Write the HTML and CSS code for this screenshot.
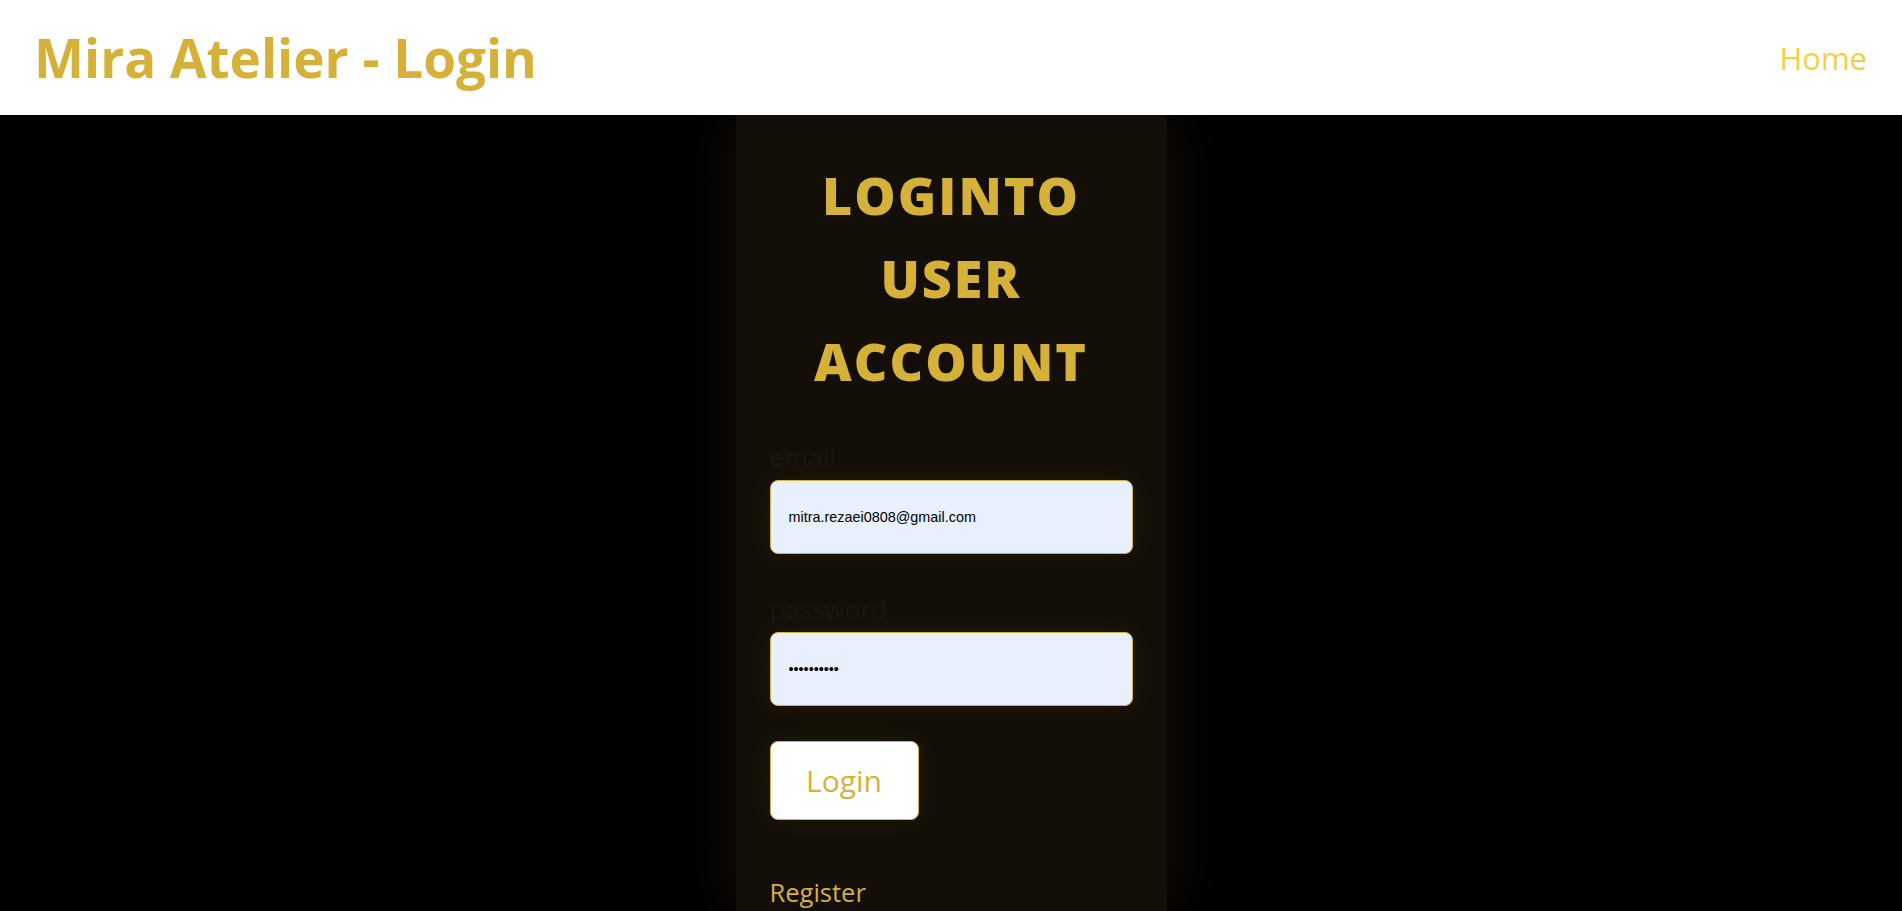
FILE: index.html
```html
<!DOCTYPE html>
<html lang="en">
<head>
<meta charset="utf-8">
<title>Mira Atelier - Login</title>
<link rel="stylesheet" href="styles.css">
</head>
<body>
<header class="topbar">
  <h1 class="brand">Mira Atelier - Login</h1>
  <nav class="nav"><a class="nav-link" href="#">Home</a></nav>
</header>
<main class="stage">
  <section class="card">
    <h2 class="card-title">LOGINTO USER ACCOUNT</h2>
    <form class="form">
      <label class="field-label" for="email">email</label>
      <input class="field-input" id="email" type="email" value="mitra.rezaei0808@gmail.com">
      <label class="field-label field-label-pw" for="password">password</label>
      <input class="field-input" id="password" type="password" value="1234567890">
      <button class="btn-login" type="button">Login</button>
    </form>
    <a class="register" href="#">Register</a>
  </section>
</main>
</body>
</html>
```
FILE: styles.css
```css
* { box-sizing: border-box; }
html, body { margin: 0; padding: 0; }
body {
  background: #000;
  font-family: "Open Sans", "DejaVu Sans", sans-serif;
  height: 911px;
  overflow: hidden;
}
.topbar {
  height: 115px;
  background: #fff;
  display: flex;
  align-items: center;
  justify-content: space-between;
  padding: 0 35px 0 34px;
}
.brand {
  margin: 0;
  font-size: 53px;
  font-weight: 700;
  color: #d5b13a;
  letter-spacing: 0;
}
.nav-link {
  color: #f4cf45;
  font-size: 31px;
  text-decoration: none;
}
.stage {
  display: flex;
  justify-content: center;
  overflow: hidden;
  height: 796px;
}
.card {
  width: 431px;
  min-height: 796px;
  background: #130f08;
  padding: 38px 34px 0;
  box-shadow: 0 0 60px rgba(25, 20, 10, 0.9);
}
.card-title {
  margin: 0 0 38px;
  text-align: center;
  color: #d5b13a;
  font-size: 52px;
  font-weight: 800;
  line-height: 83px;
  letter-spacing: 2px;
}
.form {
  display: flex;
  flex-direction: column;
  align-items: flex-start;
}
.field-label {
  color: #19170f;
  font-size: 26px;
  line-height: 34px;
  margin-bottom: 6px;
}
.field-label-pw { margin-top: 38px; }
.field-input {
  width: 363px;
  height: 74px;
  background: #e8f0fe;
  border: 1px solid #d5b13a;
  border-radius: 8px;
  padding: 0 18px;
  font-family: "Liberation Sans", Arial, sans-serif;
  font-size: 14.4px;
  color: #000;
  box-shadow: 0 0 30px rgba(212, 175, 55, 0.08);
  outline: none;
}
.btn-login {
  margin-top: 35px;
  width: 149px;
  height: 79px;
  background: #fff;
  border: 1px solid #d5b13a;
  border-radius: 8px;
  color: #d5b13a;
  font-family: inherit;
  font-size: 30px;
  box-shadow: 0 0 30px rgba(212, 175, 55, 0.08);
}
.register {
  display: inline-block;
  margin-top: 55px;
  color: #d5b13a;
  font-size: 25.5px;
  text-decoration: none;
}
```
